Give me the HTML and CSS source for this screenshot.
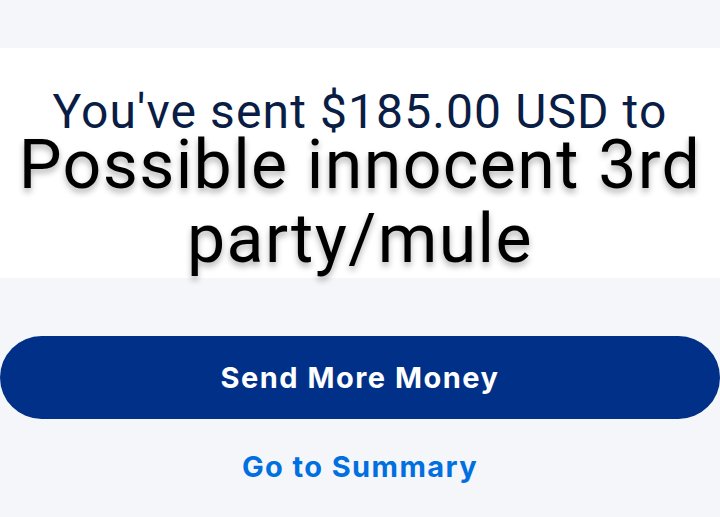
FILE: index.html
```html
<!DOCTYPE html>
<html>
  <head>
    <meta charset="UTF-8">
    <title>Transfer sent</title>
    <link rel="stylesheet" href="styles.css">
  </head>
  <body>
    <div class="top-band"></div>

    <div class="card">
      <p class="sent-line">You've sent $185.00 USD to</p>
      <p class="recipient">Possible innocent 3rd party/mule</p>
    </div>

    <div class="actions">
      <button class="primary-btn">Send More Money</button>
      <a class="summary-link" href="#summary">Go to Summary</a>
    </div>
  </body>
</html>
```

FILE: styles.css
```css
/* Page base */
body {
  margin: 0;
  background-color: #f5f6fa;
  font-family: Roboto, "Liberation Sans", Arial, sans-serif;
}

.top-band {
  height: 48px;
}

/* White confirmation card */
.card {
  background-color: #fff;
  padding: 48px 0 2px;
  text-align: center;
}

.sent-line {
  margin: 0;
  font-size: 48px;
  line-height: 32px;
  letter-spacing: 1.1px;
  color: #0a1d45;
}

.recipient {
  margin: 0 auto;
  width: 710px;
  font-size: 68px;
  line-height: 74px;
  letter-spacing: 1.4px;
  color: #000;
  text-shadow: 0 4px 6px rgba(0, 0, 0, 0.3);
}

/* Buttons */
.actions {
  display: flex;
  flex-direction: column;
  align-items: center;
}

.primary-btn {
  margin-top: 58px;
  width: 100%;
  height: 83px;
  border: none;
  border-radius: 42px;
  background-color: #003087;
  color: #fff;
  font-family: Inter, Roboto, sans-serif;
  font-size: 29px;
  font-weight: 700;
  letter-spacing: 1.5px;
  cursor: pointer;
}

.summary-link {
  margin-top: 31px;
  font-family: Inter, Roboto, sans-serif;
  font-size: 29px;
  font-weight: 700;
  line-height: 34px;
  letter-spacing: 1.4px;
  color: #0070e0;
  text-decoration: none;
}
```
